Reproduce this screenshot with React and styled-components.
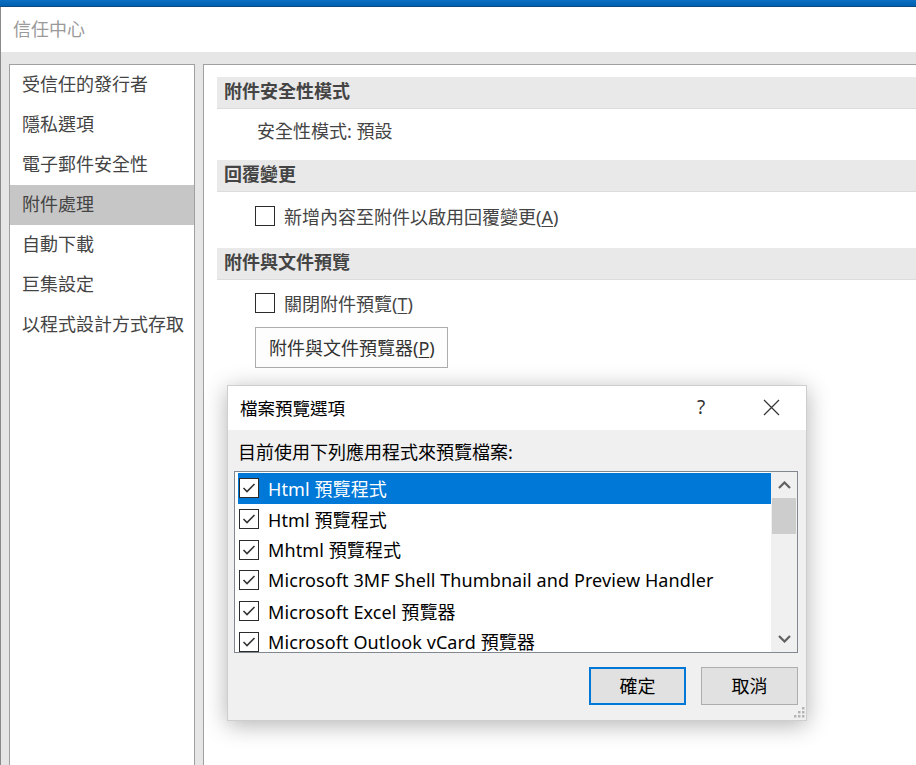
import React from "react";
import styled, { createGlobalStyle } from "styled-components";

const GlobalStyle = createGlobalStyle`
  html, body { margin: 0; padding: 0; }
  body {
    width: 916px;
    height: 765px;
    overflow: hidden;
    background: #e6e6e6;
    font-family: "Noto Sans", "Noto Sans CJK TC", sans-serif;
  }
  * { box-sizing: border-box; }
`;

const Window = styled.div`
  position: relative;
  width: 916px;
  height: 765px;
  display: flex;
  flex-direction: column;
  overflow: hidden;
`;

const TopStrip = styled.div`
  height: 7px;
  flex: none;
  background: linear-gradient(#0b6fc2, #0060b0);
  border-bottom: 1px solid #0a4a84;
`;

const TitleBar = styled.div`
  height: 45px;
  flex: none;
  display: flex;
  align-items: center;
  padding: 0 0 4px 12px;
  background: #fff;
  border-left: 1px solid #8a8a8a;
  font-size: 18px;
  color: #9a9a9a;
`;

const Main = styled.div`
  flex: 1;
  display: flex;
  gap: 8px;
  padding: 12px 0 0 8px;
  background: #e6e6e6;
  border-left: 1px solid #8a8a8a;
  min-height: 0;
`;

const Nav = styled.nav`
  width: 186px;
  flex: none;
  display: flex;
  flex-direction: column;
  background: #fff;
  border: 1px solid #a0a0a0;
  border-bottom: none;
`;

const NavItem = styled.div`
  height: 40px;
  display: flex;
  align-items: center;
  padding: 0 0 4px 12px;
  font-size: 18px;
  color: #444;
  background: ${(p) => (p.$active ? "#c6c6c6" : "transparent")};
`;

const Content = styled.div`
  flex: 1;
  display: flex;
  flex-direction: column;
  background: #fff;
  border-top: 1px solid #a0a0a0;
  border-left: 1px solid #a0a0a0;
  padding: 12px 0 0 13px;
`;

const SectionHeader = styled.div`
  height: 32px;
  display: flex;
  align-items: center;
  padding: 0 0 5px 7px;
  background: #e9e9e9;
  border-bottom: 1px solid #dcdcdc;
  font-size: 18px;
  font-weight: 700;
  color: #444;
`;

const SectionBody = styled.div`
  display: flex;
  flex-direction: column;
  align-items: flex-start;
  height: ${(p) => p.$height}px;
  padding: ${(p) => p.$top}px 0 0 38px;
`;

const PlainText = styled.div`
  padding-left: 2px;
  line-height: 24px;
  font-size: 18px;
  color: #444;
`;

const CheckRow = styled.label`
  display: flex;
  align-items: center;
  gap: 9px;
  height: 20px;
  font-size: 18px;
  color: #444;
`;

const Box = styled.span`
  width: 20px;
  height: 20px;
  flex: none;
  border: 1px solid #2b2b2b;
  background: #fff;
  display: flex;
  align-items: center;
  justify-content: center;
`;

const U = styled.span`
  text-decoration: underline;
  text-underline-offset: 2px;
  text-decoration-thickness: 1px;
`;

const PlainButton = styled.button`
  margin-top: 14px;
  width: 193px;
  height: 41px;
  padding: 0 0 2px 13px;
  text-align: left;
  border: 1px solid #adadad;
  background: #fdfdfd;
  font-family: inherit;
  font-size: 18px;
  color: #333;
`;

/* Dialog */
const Dialog = styled.div`
  position: absolute;
  left: 227px;
  top: 385px;
  width: 580px;
  height: 336px;
  display: flex;
  flex-direction: column;
  background: #f0f0f0;
  border: 1px solid rgba(0, 0, 0, 0.14);
  box-shadow: 0 4px 22px rgba(0, 0, 0, 0.3);
`;

const DialogTitle = styled.div`
  height: 44px;
  flex: none;
  display: flex;
  align-items: center;
  padding: 0 0 2px 12px;
  background: #fff;
  font-size: 17.5px;
  color: #000;
`;

const TitleText = styled.div`
  flex: 1;
`;

const TitleButton = styled.div`
  width: 46px;
  height: 42px;
  display: flex;
  align-items: center;
  justify-content: center;
  margin-right: ${(p) => p.$mr}px;
  font-size: 19px;
  color: #333;
`;

const DialogBody = styled.div`
  flex: 1;
  display: flex;
  flex-direction: column;
  padding: 0 8px 0 6px;
  position: relative;
`;

const DialogLabel = styled.div`
  margin: 10px 0 7px 4px;
  line-height: 24px;
  font-size: 18px;
  color: #000;
`;

const ListBox = styled.div`
  height: 182px;
  display: flex;
  border: 1px solid #828790;
  background: #fff;
`;

const ListArea = styled.div`
  flex: 1;
  padding: 1px 0 0 3px;
  overflow: hidden;
`;

const ListRow = styled.div`
  height: 30.7px;
  display: flex;
  align-items: center;
  gap: 9px;
  padding-left: 1px;
  font-size: 18px;
  white-space: nowrap;
  color: ${(p) => (p.$selected ? "#fff" : "#000")};
  background: ${(p) => (p.$selected ? "#0078d7" : "transparent")};
`;

const RowText = styled.span`
  padding-bottom: 1px;
  letter-spacing: 0.1px;
`;

const ScrollBar = styled.div`
  width: 26px;
  flex: none;
  display: flex;
  flex-direction: column;
  background: #f0f0f0;
`;

const ScrollArrow = styled.div`
  height: 26px;
  flex: none;
  display: flex;
  align-items: center;
  justify-content: center;
`;

const Thumb = styled.div`
  height: 36px;
  margin: 0 1px;
  background: #cdcdcd;
`;

const Spacer = styled.div`
  flex: 1;
`;

const Footer = styled.div`
  display: flex;
  justify-content: flex-end;
  gap: 15px;
  margin-top: 14px;
`;

const DialogButton = styled.button`
  width: 97px;
  height: 38px;
  background: #e1e1e1;
  border: ${(p) => (p.$default ? "2px solid #0078d7" : "1px solid #adadad")};
  font-family: inherit;
  font-size: 18px;
  color: #000;
  padding: 0 0 2px;
`;

const Grip = styled.svg`
  position: absolute;
  right: 1px;
  bottom: 2px;
`;

const CheckIcon = ({ color = "#333" }) => (
  <svg width="16" height="16" viewBox="0 0 16 16">
    <polyline points="2.5,8 6,11.5 13.5,4" fill="none" stroke={color} strokeWidth="1.6" />
  </svg>
);

const Chevron = ({ up }) => (
  <svg width="13" height="8" viewBox="0 0 13 8">
    <polyline
      points={up ? "1,7 6.5,1.5 12,7" : "1,1 6.5,6.5 12,1"}
      fill="none"
      stroke="#606060"
      strokeWidth="2.2"
    />
  </svg>
);

const navItems = [
  "受信任的發行者",
  "隱私選項",
  "電子郵件安全性",
  "附件處理",
  "自動下載",
  "巨集設定",
  "以程式設計方式存取",
];

const previewers = [
  "Html 預覽程式",
  "Html 預覽程式",
  "Mhtml 預覽程式",
  "Microsoft 3MF Shell Thumbnail and Preview Handler",
  "Microsoft Excel 預覽器",
  "Microsoft Outlook vCard 預覽器",
];

export default function App() {
  return (
    <>
      <GlobalStyle />
      <Window>
        <TopStrip />
        <TitleBar>信任中心</TitleBar>
        <Main>
          <Nav>
            {navItems.map((n) => (
              <NavItem key={n} $active={n === "附件處理"}>
                {n}
              </NavItem>
            ))}
          </Nav>
          <Content>
            <SectionHeader>附件安全性模式</SectionHeader>
            <SectionBody $height={51} $top={10}>
              <PlainText>安全性模式: 預設</PlainText>
            </SectionBody>
            <SectionHeader>回覆變更</SectionHeader>
            <SectionBody $height={56} $top={14}>
              <CheckRow>
                <Box />
                <span>
                  新增內容至附件以啟用回覆變更(<U>A</U>)
                </span>
              </CheckRow>
            </SectionBody>
            <SectionHeader>附件與文件預覽</SectionHeader>
            <SectionBody $height={120} $top={13}>
              <CheckRow>
                <Box />
                <span>
                  關閉附件預覽(<U>T</U>)
                </span>
              </CheckRow>
              <PlainButton>
                附件與文件預覽器(<U>P</U>)
              </PlainButton>
            </SectionBody>
          </Content>
        </Main>

        <Dialog>
          <DialogTitle>
            <TitleText>檔案預覽選項</TitleText>
            <TitleButton $mr={24}>?</TitleButton>
            <TitleButton $mr={12}>
              <svg width="17" height="17" viewBox="0 0 17 17">
                <path d="M1 1 L16 16 M16 1 L1 16" stroke="#333" strokeWidth="1.2" />
              </svg>
            </TitleButton>
          </DialogTitle>
          <DialogBody>
            <DialogLabel>目前使用下列應用程式來預覽檔案:</DialogLabel>
            <ListBox>
              <ListArea>
                {previewers.map((p, i) => (
                  <ListRow key={i} $selected={i === 0}>
                    <Box>
                      <CheckIcon />
                    </Box>
                    <RowText>{p}</RowText>
                  </ListRow>
                ))}
              </ListArea>
              <ScrollBar>
                <ScrollArrow>
                  <Chevron up />
                </ScrollArrow>
                <Thumb />
                <Spacer />
                <ScrollArrow>
                  <Chevron />
                </ScrollArrow>
              </ScrollBar>
            </ListBox>
            <Footer>
              <DialogButton $default>確定</DialogButton>
              <DialogButton>取消</DialogButton>
            </Footer>
            <Grip width="12" height="12" viewBox="0 0 12 12">
              <g fill="#b5b5b5">
                <rect x="9" y="1" width="2.5" height="2.5" />
                <rect x="5" y="5" width="2.5" height="2.5" />
                <rect x="9" y="5" width="2.5" height="2.5" />
                <rect x="1" y="9" width="2.5" height="2.5" />
                <rect x="5" y="9" width="2.5" height="2.5" />
                <rect x="9" y="9" width="2.5" height="2.5" />
              </g>
            </Grip>
          </DialogBody>
        </Dialog>
      </Window>
    </>
  );
}
